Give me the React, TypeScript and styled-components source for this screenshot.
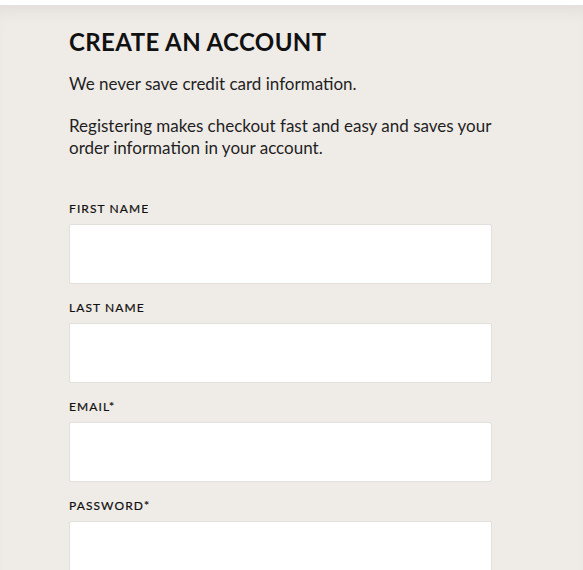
import React from 'react';
import styled, { createGlobalStyle } from 'styled-components';

const GlobalStyle = createGlobalStyle`
  html, body {
    margin: 0;
    padding: 0;
    background: #ffffff;
  }
  body {
    font-family: "Lato", "Noto Sans", sans-serif;
    color: #1a1a1a;
  }
`;

const Page = styled.div`
  padding-top: 5px;
  background: #ffffff;
`;

const Panel = styled.main`
  background: #efebe7;
  box-shadow: inset 0 14px 18px -10px rgba(0, 0, 0, 0.07);
  min-height: 565px;
  padding: 22px 0 0 69px;
`;

const Content = styled.div`
  width: 423px;
`;

const Title = styled.h1`
  margin: 0 0 16px;
  font-family: "Lato", sans-serif;
  font-weight: 700;
  font-size: 24px;
  line-height: 30px;
  letter-spacing: 0.4px;
  color: #111;
`;

const Text = styled.p<{ $last?: boolean }>`
  margin: 0 0 ${(p) => (p.$last ? 0 : 20)}px;
  font-size: 17px;
  line-height: 22px;
  color: #1f1f1f;
`;

const Form = styled.form`
  margin-top: 42px;
  display: flex;
  flex-direction: column;
  gap: 16px;
`;

const Field = styled.label`
  display: flex;
  flex-direction: column;
  gap: 8px;
`;

const Label = styled.span`
  font-size: 12px;
  line-height: 15px;
  font-weight: 400;
  letter-spacing: 1.1px;
  text-transform: uppercase;
  color: #111;
  -webkit-text-stroke: 0.2px #111;
`;

const Input = styled.input`
  box-sizing: border-box;
  height: 60px;
  width: 100%;
  background: #ffffff;
  border: 1px solid #e3dfdb;
  border-radius: 2px;
  padding: 0 16px;
  font: inherit;
  outline: none;
`;

const fields = [
  { label: 'First Name', type: 'text' },
  { label: 'Last Name', type: 'text' },
  { label: 'Email*', type: 'email' },
  { label: 'Password*', type: 'password' },
];

export default function App() {
  return (
    <Page>
      <GlobalStyle />
      <Panel>
        <Content>
          <Title>CREATE AN ACCOUNT</Title>
          <Text>We never save credit card information.</Text>
          <Text $last>
            Registering makes checkout fast and easy and saves your order information in your account.
          </Text>
          <Form onSubmit={(e) => e.preventDefault()}>
            {fields.map((f) => (
              <Field key={f.label}>
                <Label>{f.label}</Label>
                <Input type={f.type} />
              </Field>
            ))}
          </Form>
        </Content>
      </Panel>
    </Page>
  );
}
